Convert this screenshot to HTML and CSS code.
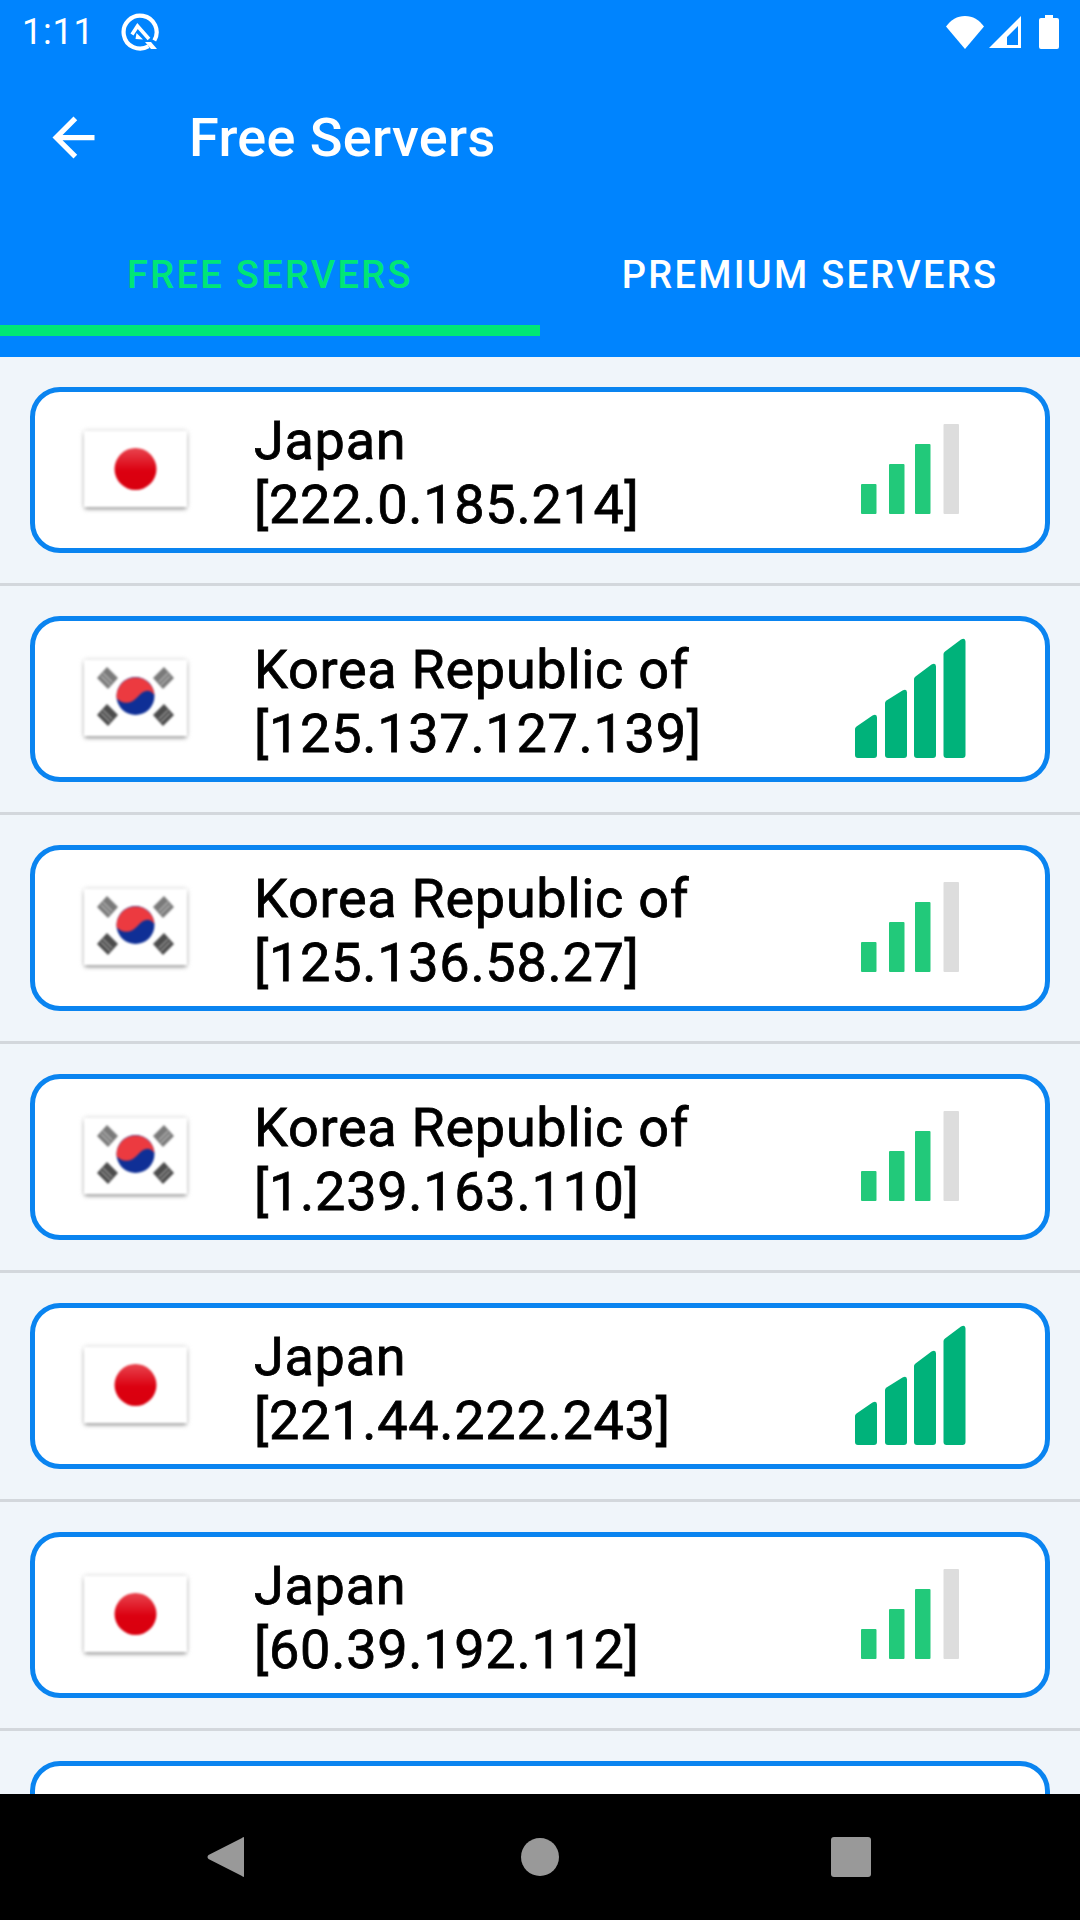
FILE: index.html
```html
<!DOCTYPE html>
<html lang="en">
<head>
<meta charset="utf-8">
<title>Free Servers</title>
<link rel="stylesheet" href="styles.css">
</head>
<body>
<svg class="defs" width="0" height="0" aria-hidden="true">
  <defs>
    <linearGradient id="jp-red" x1="0" y1="0" x2="0" y2="1">
      <stop offset="0" stop-color="#e8454f"/>
      <stop offset="0.55" stop-color="#dc0010"/>
      <stop offset="1" stop-color="#d9000f"/>
    </linearGradient>
    <symbol id="flag-jp" viewBox="0 0 103 80">
      <circle cx="51.5" cy="38" r="21" fill="url(#jp-red)"/>
    </symbol>
    <symbol id="flag-kr" viewBox="0 0 103 80">
      <circle cx="51.5" cy="36" r="19" fill="#0f2f96"/>
      <path d="M32.5 38C37.500 44 46.500 45 53.500 37S65.500 29 70.500 35A19 19 0 0 0 32.500 38z" fill="#ec3a40"/>
      <g fill="#7a7a7a">
        <path d="M23 7l11 11-10 11-11-11z"/>
        <path d="M80 7l-11 11 10 11 11-11z"/>
      </g>
      <g fill="#4c4c4c">
        <path d="M23 44l11 11-10 11-11-11z"/>
        <path d="M80 44l-11 11 10 11 11-11z"/>
      </g>
      <g stroke="#fff" stroke-width="1.200" opacity="0.45">
        <path d="M19 13l9 9M17 16l9 9"/>
        <path d="M84 13l-9 9M86 16l-9 9"/>
        <path d="M19 50l9 9M17 53l9 9"/>
        <path d="M84 50l-9 9M86 53l-9 9"/>
      </g>
    </symbol>
    <symbol id="signal-mid" viewBox="0 0 120 140">
      <g fill="#22c97a">
        <rect x="11" y="84" width="15.500" height="30" rx="1"/>
        <rect x="39" y="64" width="15.500" height="50" rx="1"/>
        <rect x="65" y="44" width="15.500" height="70" rx="1"/>
      </g>
      <rect x="93.500" y="24" width="15.500" height="90" rx="1" fill="#dddddd"/>
    </symbol>
    <symbol id="signal-full" viewBox="0 0 120 140">
      <g fill="#00b27a">
        <path d="M5 100q0-1.500 1.500-2.500l16-11q4.500-2 4.500 2v37.500q0 3-3 3H8q-3 0-3-3z"/>
        <path d="M35 74q0-1.500 1.500-2.500l16-10q4.500-2 4.500 2v62.500q0 3-3 3H38q-3 0-3-3z"/>
        <path d="M64 50q0-1.500 1.500-2.500l16-12q4.500-2 4.500 2v88.500q0 3-3 3H67q-3 0-3-3z"/>
        <path d="M93.500 25q0-1.500 1.500-2.500l16-12q4.500-2 4.500 2v113.500q0 3-3 3h-16q-3 0-3-3z"/>
      </g>
    </symbol>
  </defs>
</svg>

<div class="phone">
  <header class="appbar">
    <div class="status">
      <span class="clock">1:11</span>
      <svg class="q-icon" viewBox="0 0 38 38" aria-hidden="true">
        <path d="M27.500 33.300A16.500 16.500 0 1 1 33.300 27.500" fill="none" stroke="#fff" stroke-width="4.200"/>
        <path d="M11 21.500L16.500 13L28 26" fill="none" stroke="#fff" stroke-width="3.600"/>
        <path d="M15.500 20l6.500 6.500-7.500-.5z" fill="#fff"/>
        <path d="M24 29h6l6 7h-6z" fill="#fff"/>
      </svg>
      <span class="status-right">
        <svg class="wifi" viewBox="0 0 38 33" aria-hidden="true"><path d="M19 33L0 10.500C5 4 11 0 19 0S33 4 38 10.500z" fill="#fff"/></svg>
        <svg class="cell" viewBox="0 0 32 32" aria-hidden="true"><path d="M0 32L32 0v32zM18 29h11V10L18 21z" fill="#fff" fill-rule="evenodd"/></svg>
        <svg class="battery" viewBox="0 0 20 34" aria-hidden="true"><path d="M6 0h8v3h4q2 0 2 2v27q0 2-2 2H2q-2 0-2-2V5q0-2 2-2h4z" fill="#fff"/></svg>
      </span>
    </div>
    <div class="toolbar">
      <svg class="back" viewBox="0 0 24 24" aria-hidden="true"><path d="M20 11H7.830l5.590-5.590L12 4l-8 8 8 8 1.410-1.410L7.830 13H20v-2z" fill="#fff"/></svg>
      <h1 class="title">Free Servers</h1>
    </div>
    <nav class="tabs">
      <div class="tab tab-active">FREE SERVERS</div>
      <div class="tab">PREMIUM SERVERS</div>
    </nav>
  </header>

  <main class="list">
    <div class="row">
      <div class="card">
        <div class="flag"><svg class="flag-art"><use href="#flag-jp"/></svg></div>
        <div class="info"><div class="country">Japan</div><div class="ip">[222.0.185.214]</div></div>
        <svg class="signal"><use href="#signal-mid"/></svg>
      </div>
    </div>
    <div class="row">
      <div class="card">
        <div class="flag"><svg class="flag-art"><use href="#flag-kr"/></svg></div>
        <div class="info"><div class="country">Korea Republic of</div><div class="ip">[125.137.127.139]</div></div>
        <svg class="signal"><use href="#signal-full"/></svg>
      </div>
    </div>
    <div class="row">
      <div class="card">
        <div class="flag"><svg class="flag-art"><use href="#flag-kr"/></svg></div>
        <div class="info"><div class="country">Korea Republic of</div><div class="ip">[125.136.58.27]</div></div>
        <svg class="signal"><use href="#signal-mid"/></svg>
      </div>
    </div>
    <div class="row">
      <div class="card">
        <div class="flag"><svg class="flag-art"><use href="#flag-kr"/></svg></div>
        <div class="info"><div class="country">Korea Republic of</div><div class="ip">[1.239.163.110]</div></div>
        <svg class="signal"><use href="#signal-mid"/></svg>
      </div>
    </div>
    <div class="row">
      <div class="card">
        <div class="flag"><svg class="flag-art"><use href="#flag-jp"/></svg></div>
        <div class="info"><div class="country">Japan</div><div class="ip">[221.44.222.243]</div></div>
        <svg class="signal"><use href="#signal-full"/></svg>
      </div>
    </div>
    <div class="row">
      <div class="card">
        <div class="flag"><svg class="flag-art"><use href="#flag-jp"/></svg></div>
        <div class="info"><div class="country">Japan</div><div class="ip">[60.39.192.112]</div></div>
        <svg class="signal"><use href="#signal-mid"/></svg>
      </div>
    </div>
    <div class="row">
      <div class="card"></div>
    </div>
  </main>

  <footer class="navbar">
    <svg class="nav-back" viewBox="0 0 37 42" aria-hidden="true"><path d="M37 2v38q0 2-2 0L1.500 23q-2-2 0-4L35 2q2-2 2 0z" fill="#999"/></svg>
    <span class="nav-home"></span>
    <span class="nav-recent"></span>
  </footer>
</div>
</body>
</html>
```
FILE: styles.css
```css
* { box-sizing: border-box; }
html, body { margin: 0; padding: 0; }
body { width: 1080px; height: 1920px; overflow: hidden; font-family: Roboto, "Liberation Sans", sans-serif; background: #f0f5fa; }
.defs { display: block; height: 0; }
.phone { width: 1080px; height: 1920px; display: flex; flex-direction: column; overflow: hidden; }

.appbar { height: 357px; flex: none; background: #0084fe; color: #fff; display: flex; flex-direction: column; }
.status { height: 64px; flex: none; display: flex; align-items: center; padding: 0 21px 0 22px; }
.clock { font-size: 36px; letter-spacing: 0.8px; line-height: 1; width: 99px; }
.q-icon { width: 38px; height: 38px; }
.status-right { margin-left: auto; display: flex; align-items: center; }
.wifi { width: 38px; height: 33px; }
.cell { width: 32px; height: 32px; margin-left: 5px; }
.battery { width: 20px; height: 34px; margin-left: 18px; }

.toolbar { height: 147px; flex: none; display: flex; align-items: center; padding-left: 42px; }
.back { width: 63px; height: 63px; }
.title { margin: 0 0 0 84px; font-size: 54px; font-weight: 500; letter-spacing: 0.35px; }

.tabs { flex: 1; display: flex; padding-bottom: 21px; }
.tab { width: 540px; padding-top: 14px; display: flex; align-items: center; justify-content: center; font-size: 38px; font-weight: 500; letter-spacing: 2.3px; border-bottom: 11px solid transparent; }
.tab-active { color: #00e676; border-bottom-color: #00e676; }

.list { flex: 1; min-height: 0; overflow: hidden; background: #f0f5fa; }
.row { padding: 30px; border-bottom: 3px solid #d3d7dc; }
.card { height: 166px; background: #fff; border: 5px solid #0a84f0; border-radius: 30px; display: flex; align-items: center; padding-left: 49px; }
.flag { width: 103px; height: 76px; margin-bottom: 2px; flex: none; background: #fff; box-shadow: 0 3px 4px -1px #999, 0 0 5px #d0d0d0; filter: blur(0.9px); }
.flag-art { display: block; width: 103px; height: 80px; filter: blur(0.5px); }
.info { margin-left: 67px; flex: 1; padding-top: 6px; font-size: 54px; font-weight: 400; letter-spacing: 0.72px; -webkit-text-stroke: 0.8px #000; line-height: 64px; color: #000; }
.signal { width: 120px; height: 140px; flex: none; margin-right: 75px; overflow: visible; }

.navbar { height: 126px; flex: none; background: #000; display: flex; align-items: center; padding-left: 207px; }
.nav-back { width: 37px; height: 42px; }
.nav-home { width: 38px; height: 38px; border-radius: 50%; background: #999; margin-left: 277px; }
.nav-recent { width: 40px; height: 40px; border-radius: 3px; background: #999; margin-left: 272px; }
```
